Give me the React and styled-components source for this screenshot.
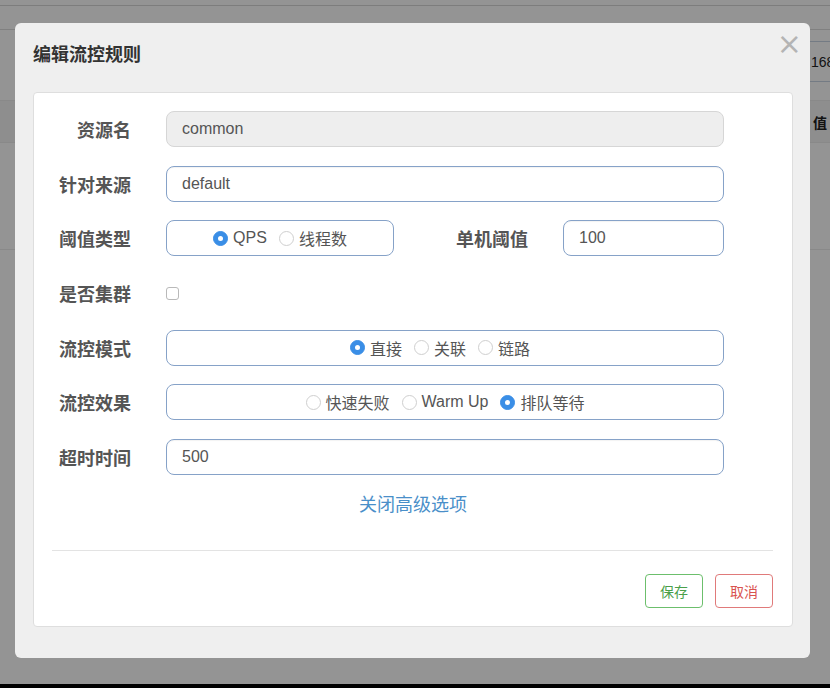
import React from "react";
import styled, { createGlobalStyle } from "styled-components";

const GlobalStyle = createGlobalStyle`
  html, body { margin: 0; padding: 0; background: #000; overflow: hidden; }
  body { font-family: "Liberation Sans", "Noto Sans CJK SC", sans-serif; }
  * { box-sizing: border-box; }
`;

const CJK = `"Liberation Sans", "Noto Sans CJK SC", sans-serif`;

const Page = styled.div`
  position: relative;
  width: 830px;
  height: 684px;
  background: #fff;
  overflow: hidden;
`;

const TopStrip = styled.div`
  height: 6px;
  border-bottom: 1px solid #d8d8d8;
`;

const NavBar = styled.div`
  height: 24px;
  border-bottom: 1px solid #dcdcdc;
`;

const Toolbar = styled.div`
  display: flex;
  justify-content: flex-end;
  margin-top: 11px;
  height: 41px;
`;

const SearchBox = styled.div`
  width: 140px;
  margin-right: -116px;
  border-top: 1px solid #c8d4e4;
  border-bottom: 1px solid #c8d4e4;
  display: flex;
  align-items: center;
  padding-left: 5px;
  font-size: 14px;
  color: #222;
`;

const Table = styled.div`
  margin-top: 18px;
`;

const TableHead = styled.div`
  height: 43px;
  display: flex;
  align-items: center;
  justify-content: flex-end;
  border-top: 1px solid #ececec;
  border-bottom: 1px solid #ececec;
  background: #f4f4f4;
  padding-right: 3px;
  font-family: ${CJK};
  font-weight: 700;
  font-size: 14px;
  color: #222;
`;

const TableRow = styled.div`
  height: 107px;
  border-bottom: 1px solid #ececec;
`;

const Backdrop = styled.div`
  position: absolute;
  inset: 0;
  background: rgba(0, 0, 0, 0.42);
`;

const Modal = styled.div`
  position: absolute;
  left: 15px;
  top: 23px;
  width: 795px;
  height: 635px;
  background: #efefef;
  border-radius: 6px;
  padding: 0 17px 31px 18px;
  display: flex;
  flex-direction: column;
`;

const Header = styled.div`
  height: 60px;
  margin-bottom: 9px;
  display: flex;
  align-items: center;
  justify-content: space-between;
`;

const Title = styled.h4`
  margin: 0;
  font-family: ${CJK};
  font-size: 18px;
  font-weight: 700;
  color: #333;
`;

const Close = styled.button`
  align-self: flex-start;
  margin-top: 8px;
  margin-right: -9px;
  border: 0;
  background: none;
  padding: 0;
  font-family: "DejaVu Sans", sans-serif;
  font-size: 30px;
  line-height: 26px;
  font-weight: 400;
  color: #b4b4b4;
`;

const Panel = styled.div`
  flex: 1;
  background: #fff;
  border: 1px solid #dedede;
  border-radius: 4px;
  display: flex;
  flex-direction: column;
`;

const Form = styled.div`
  padding: 18px 68px 0 0;
  display: flex;
  flex-direction: column;
  gap: 18.7px;
`;

const Row = styled.div`
  display: flex;
  align-items: center;
  height: 36px;
  gap: 35px;
`;

const Label = styled.label`
  width: 97px;
  flex: none;
  text-align: right;
  font-family: ${CJK};
  font-size: 18px;
  font-weight: 700;
  color: #555;
`;

const Input = styled.div`
  flex: ${(p) => (p.$width ? "none" : "1")};
  width: ${(p) => (p.$width ? `${p.$width}px` : "auto")};
  height: 36px;
  display: flex;
  align-items: center;
  padding-left: 15px;
  border: 1px solid ${(p) => (p.$disabled ? "#d6d6d6" : "#86a2c8")};
  background: ${(p) => (p.$disabled ? "#eeeeee" : "#fff")};
  border-radius: 8px;
  font-size: 16px;
  color: #555;
  box-shadow: ${(p) => (p.$disabled ? "none" : "inset 0 1px 1px rgba(0,0,0,0.05)")};
`;

const RadioBox = styled.div`
  flex: ${(p) => (p.$width ? "none" : "1")};
  width: ${(p) => (p.$width ? `${p.$width}px` : "auto")};
  height: 36px;
  display: flex;
  align-items: center;
  justify-content: center;
  gap: 12px;
  border: 1px solid #86a2c8;
  border-radius: 8px;
  padding-right: ${(p) => p.$shift || 0}px;
`;

const RadioItem = styled.span`
  display: inline-flex;
  align-items: center;
  gap: 5px;
  font-family: ${CJK};
  font-size: 16px;
  color: #555;
`;

const RadioDot = styled.span`
  width: 15px;
  height: 15px;
  border-radius: 50%;
  display: inline-flex;
  align-items: center;
  justify-content: center;
  background: ${(p) => (p.$on ? "#3a8ee6" : "#fff")};
  border: 1px solid ${(p) => (p.$on ? "#3a8ee6" : "#cfcfcf")};
  &::after {
    content: "";
    width: 5px;
    height: 5px;
    border-radius: 50%;
    background: ${(p) => (p.$on ? "#fff" : "transparent")};
  }
`;

const SubLabel = styled.label`
  flex: 1;
  text-align: right;
  margin-left: -35px;
  font-family: ${CJK};
  font-size: 18px;
  font-weight: 700;
  color: #555;
`;

const Check = styled.span`
  width: 13px;
  height: 13px;
  border: 1px solid #b9b9b9;
  border-radius: 3px;
  background: #fff;
`;

const ToggleLink = styled.a`
  align-self: center;
  margin-top: 19px;
  font-family: ${CJK};
  font-size: 18px;
  line-height: 22px;
  color: #4a8fc9;
  text-decoration: none;
`;

const Footer = styled.div`
  margin: 34px 19px 0 18px;
  border-top: 1px solid #e3e3e3;
  padding-top: 23px;
  display: flex;
  justify-content: flex-end;
  gap: 12px;
`;

const Button = styled.button`
  width: 58px;
  height: 34px;
  border-radius: 4px;
  background: #fff;
  border: 1px solid ${(p) => p.$color};
  color: ${(p) => p.$text};
  font-family: ${CJK};
  font-size: 14px;
  padding: 0;
`;

const BottomStrip = styled.div`
  height: 4px;
  background: #000;
`;

const Radio = ({ on, children }) => (
  <RadioItem>
    <RadioDot $on={on} />
    {children}
  </RadioItem>
);

export default function App() {
  return (
    <>
      <GlobalStyle />
      <Page>
        <TopStrip />
        <NavBar />
        <Toolbar>
          <SearchBox>168.1.1</SearchBox>
        </Toolbar>
        <Table>
          <TableHead>值</TableHead>
          <TableRow />
        </Table>
        <Backdrop />
        <Modal>
          <Header>
            <Title>编辑流控规则</Title>
            <Close>×</Close>
          </Header>
          <Panel>
            <Form>
              <Row>
                <Label>资源名</Label>
                <Input $disabled>common</Input>
              </Row>
              <Row>
                <Label>针对来源</Label>
                <Input>default</Input>
              </Row>
              <Row>
                <Label>阈值类型</Label>
                <RadioBox $width={228}>
                  <Radio on>QPS</Radio>
                  <Radio>线程数</Radio>
                </RadioBox>
                <SubLabel>单机阈值</SubLabel>
                <Input $width={161}>100</Input>
              </Row>
              <Row>
                <Label>是否集群</Label>
                <Check />
              </Row>
              <Row>
                <Label>流控模式</Label>
                <RadioBox $shift={10}>
                  <Radio on>直接</Radio>
                  <Radio>关联</Radio>
                  <Radio>链路</Radio>
                </RadioBox>
              </Row>
              <Row>
                <Label>流控效果</Label>
                <RadioBox>
                  <Radio>快速失败</Radio>
                  <Radio>Warm Up</Radio>
                  <Radio on>排队等待</Radio>
                </RadioBox>
              </Row>
              <Row>
                <Label>超时时间</Label>
                <Input>500</Input>
              </Row>
            </Form>
            <ToggleLink>关闭高级选项</ToggleLink>
            <Footer>
              <Button $color="#6cbf6c" $text="#4a9f4a">保存</Button>
              <Button $color="#e07a7a" $text="#d9534f">取消</Button>
            </Footer>
          </Panel>
        </Modal>
      </Page>
      <BottomStrip />
    </>
  );
}
